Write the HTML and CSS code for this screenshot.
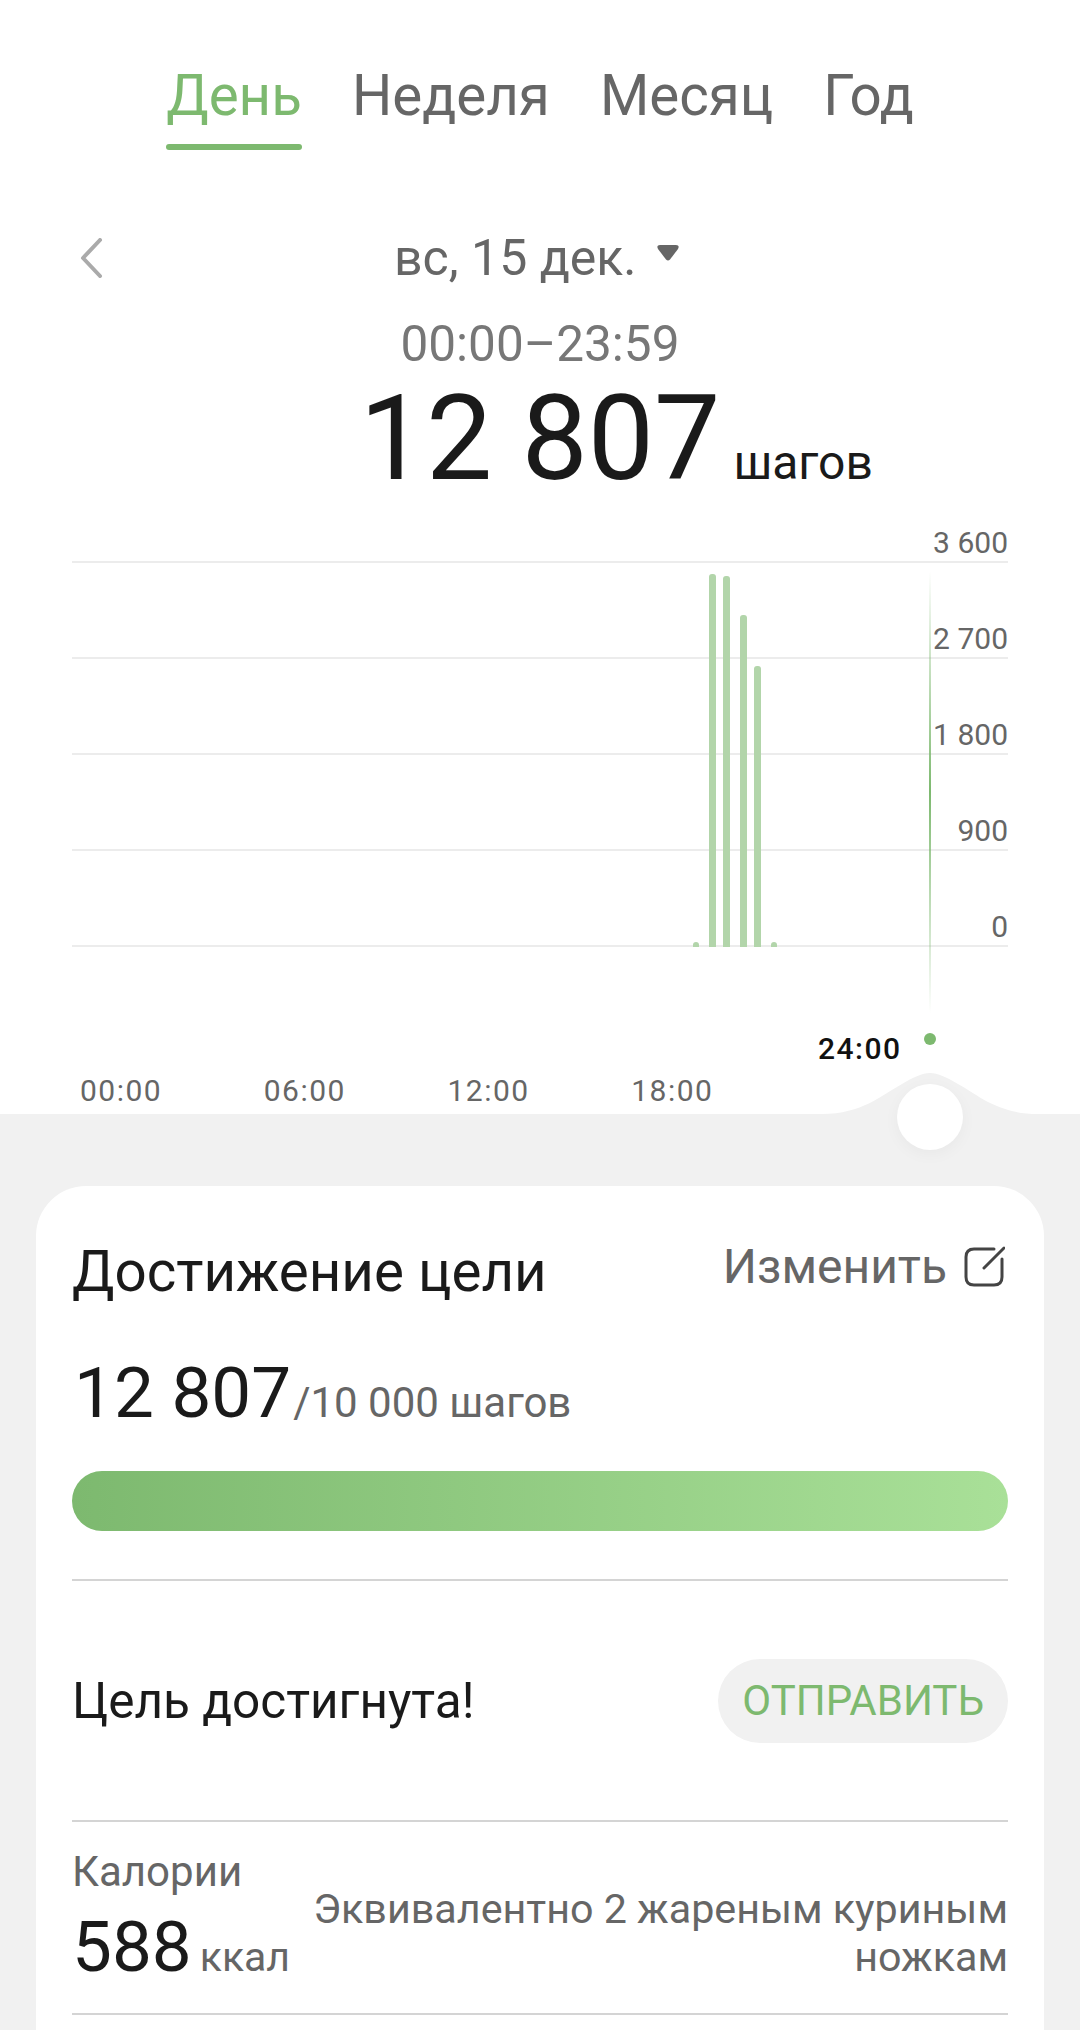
FILE: index.html
```html
<!DOCTYPE html>
<html lang="ru">
<head>
    <meta charset="UTF-8">
    <title>Шаги</title>
    <link rel="stylesheet" href="styles.css">
</head>
<body>
    <div class="page">
        <section class="top">
            <nav class="tabs">
                <div class="tab active">День</div>
                <div class="tab">Неделя</div>
                <div class="tab">Месяц</div>
                <div class="tab">Год</div>
            </nav>

            <div class="date-row">
                <svg class="back" width="24" height="40" viewBox="0 0 24 40">
                    <path d="M21 2 L4 20 L21 38" fill="none" stroke="#aaa" stroke-width="4" stroke-linecap="round" stroke-linejoin="round"/>
                </svg>
                <div class="date">вс, 15 дек.
                    <svg class="caret" width="22" height="16" viewBox="0 0 22 16">
                        <path d="M3 0 H19 Q23 0 21 4 L13 14.5 Q11 16.5 9 14.5 L1 4 Q-1 0 3 0 Z" fill="#666"/>
                    </svg>
                </div>
            </div>
            <div class="range">00:00–23:59</div>
            <div class="total"><span class="total-num">12 807</span><span class="total-unit">шагов</span></div>

            <div class="chart">
                <div class="grid-row">3 600</div>
                <div class="grid-row">2 700</div>
                <div class="grid-row">1 800</div>
                <div class="grid-row">900</div>
                <div class="grid-row">0</div>

                <div class="bar" style="left:621px;top:475px;height:5px"></div>
                <div class="bar big" style="left:637px;top:107px;height:373px"></div>
                <div class="bar big" style="left:651px;top:109px;height:371px"></div>
                <div class="bar big" style="left:668px;top:148px;height:332px"></div>
                <div class="bar big" style="left:682px;top:199px;height:281px"></div>
                <div class="bar" style="left:699px;top:475px;height:5px"></div>

                <div class="cursor-line"></div>
                <div class="cursor-dot"></div>
                <div class="cursor-time">24:00</div>

                <div class="hours">
                    <span>00:00</span>
                    <span>06:00</span>
                    <span>12:00</span>
                    <span>18:00</span>
                </div>
            </div>
        </section>

        <svg class="bump" width="216" height="41" viewBox="0 0 216 41">
            <path d="M0 41 C40 41 60 22 80 11 C92 4 100 0 108 0 C116 0 124 4 136 11 C156 22 176 41 216 41 Z" fill="#f1f1f1"/>
        </svg>
        <div class="knob"></div>

        <main class="card">
            <div class="card-head">
                <h2 class="card-title">Достижение цели</h2>
                <div class="edit">
                    <span class="edit-label">Изменить</span>
                    <svg width="42" height="42" viewBox="0 0 42 42">
                        <path d="M31 3 H11 Q3 3 3 11 V31 Q3 39 11 39 H31 Q39 39 39 31 V13" fill="none" stroke="#444" stroke-width="3" stroke-linecap="round"/>
                        <path d="M41 2 L21 22" fill="none" stroke="#444" stroke-width="3" stroke-linecap="round"/>
                    </svg>
                </div>
            </div>
            <div class="goal"><span class="goal-num">12 807</span><span class="goal-rest">/10 000 шагов</span></div>
            <div class="progress"></div>

            <div class="reached">
                <div class="reached-text">Цель достигнута!</div>
                <div class="send">ОТПРАВИТЬ</div>
            </div>

            <div class="calories">
                <div class="cal-left">
                    <div class="cal-label">Калории</div>
                    <div class="cal-value"><span class="cal-num">588</span><span class="cal-unit">ккал</span></div>
                </div>
                <div class="cal-note">Эквивалентно 2 жареным куриным ножкам</div>
            </div>
        </main>
    </div>
</body>
</html>
```

FILE: styles.css
```css
* {
    box-sizing: border-box;
}
body {
    margin: 0;
    background-color: #f1f1f1;
    font-family: Roboto, "Noto Sans", sans-serif;
    color: #1a1a1a;
}
.page {
    position: relative;
    width: 1080px;
    height: 2030px;
    overflow: hidden;
    display: flex;
    flex-direction: column;
}

/* верхняя часть */
.top {
    height: 1114px;
    flex: none;
    background-color: #fff;
}
.tabs {
    display: flex;
    justify-content: center;
    gap: 50px;
    padding-top: 62px;
    font-size: 56.5px;
    line-height: 68px;
    color: #666;
}
.tab::after {
    content: "";
    display: block;
    height: 6px;
    margin-top: 14px;
    border-radius: 3px;
}
.tab.active {
    color: #7db96f;
}
.tab.active::after {
    background-color: #7db96f;
}
.date-row {
    position: relative;
    margin-top: 80px;
    text-align: center;
    font-size: 50px;
    line-height: 56px;
    color: #666;
}
.back {
    position: absolute;
    left: 79px;
    top: 8px;
}
.date {
    display: inline-block;
    margin-right: 7px;
}
.caret {
    margin-left: 8px;
    vertical-align: 14px;
}
.range {
    margin-top: 30px;
    text-align: center;
    font-size: 49.5px;
    line-height: 56px;
    color: #777;
}
.total {
    display: grid;
    grid-template-columns: 1fr auto 1fr;
    align-items: baseline;
    margin-top: 17px;
    line-height: 100px;
}
.total-num {
    grid-column: 2;
    font-size: 118px;
}
.total-unit {
    grid-column: 3;
    margin-left: 13px;
    font-size: 48px;
}

/* график */
.chart {
    position: relative;
    margin: -46px 72px 0;
}
.grid-row {
    height: 96px;
    border-bottom: 2px solid #ececec;
    text-align: right;
    font-size: 30px;
    line-height: 32px;
    padding-top: 60px;
    color: #666;
}
.bar {
    position: absolute;
    width: 6px;
    background-color: #b2d5aa;
    border-radius: 3px 3px 0 0;
}
.bar.big {
    width: 7px;
}
.cursor-line {
    position: absolute;
    left: 857px;
    top: 104px;
    width: 2px;
    height: 442px;
    background: linear-gradient(to bottom, rgba(125,185,111,0), #7db96f 50%, rgba(125,185,111,0));
}
.cursor-dot {
    position: absolute;
    left: 852px;
    top: 566px;
    width: 12px;
    height: 12px;
    border-radius: 50%;
    background-color: #7db96f;
}
.cursor-time {
    position: absolute;
    left: 746px;
    top: 564px;
    font-size: 30px;
    line-height: 36px;
    font-weight: 500;
    letter-spacing: 1.5px;
    color: #111;
}
.hours {
    position: absolute;
    left: 8px;
    top: 606px;
    display: flex;
    gap: 101.5px;
    font-size: 30px;
    line-height: 36px;
    letter-spacing: 1.5px;
    color: #666;
}

/* ползунок */
.bump {
    position: absolute;
    left: 822px;
    top: 1073px;
}
.knob {
    position: absolute;
    left: 897px;
    top: 1084px;
    width: 66px;
    height: 66px;
    border-radius: 50%;
    background-color: #fff;
    box-shadow: 0 4px 16px rgba(0,0,0,0.04);
}

/* карточка */
.card {
    flex: 1;
    margin: 72px 36px 0;
    padding: 0 36px;
    background-color: #fff;
    border-radius: 50px 50px 0 0;
}
.card-head {
    display: flex;
    justify-content: space-between;
    align-items: flex-start;
    padding-top: 52px;
}
.card-title {
    margin: 0;
    font-size: 56.5px;
    line-height: 68px;
    font-weight: 400;
}
.edit {
    display: flex;
    align-items: center;
    gap: 16px;
    margin-right: 3px;
    font-size: 48px;
    line-height: 56px;
    color: #666;
}
.edit-label {
    margin-top: 1px;
}
.goal {
    margin-top: 45px;
    line-height: 84px;
}
.goal-num {
    margin-left: 2px;
    font-size: 71px;
}
.goal-rest {
    margin-left: 2px;
    font-size: 42px;
    color: #666;
}
.progress {
    height: 60px;
    margin-top: 17px;
    border-radius: 30px;
    background: linear-gradient(to right, #7db96f, #a9e098);
}
.reached {
    display: flex;
    justify-content: space-between;
    align-items: center;
    height: 243px;
    margin-top: 48px;
    border-top: 2px solid #d4d4d4;
    border-bottom: 2px solid #d4d4d4;
}
.reached-text {
    font-size: 49.5px;
}
.send {
    padding: 0 24px;
    height: 84px;
    border-radius: 42px;
    background-color: #f1f1f1;
    font-size: 42px;
    line-height: 84px;
    color: #7db96f;
}
.calories {
    display: flex;
    justify-content: space-between;
    align-items: flex-start;
    height: 193px;
    padding-top: 26px;
    border-bottom: 2px solid #d4d4d4;
}
.cal-label {
    font-size: 42px;
    line-height: 48px;
    color: #666;
}
.cal-value {
    margin-top: 13px;
    line-height: 76px;
}
.cal-num {
    font-size: 71px;
}
.cal-unit {
    margin-left: 8px;
    font-size: 41px;
    color: #666;
}
.cal-note {
    width: 700px;
    margin-top: 37px;
    text-align: right;
    font-size: 41.25px;
    line-height: 48px;
    color: #666;
}
```
